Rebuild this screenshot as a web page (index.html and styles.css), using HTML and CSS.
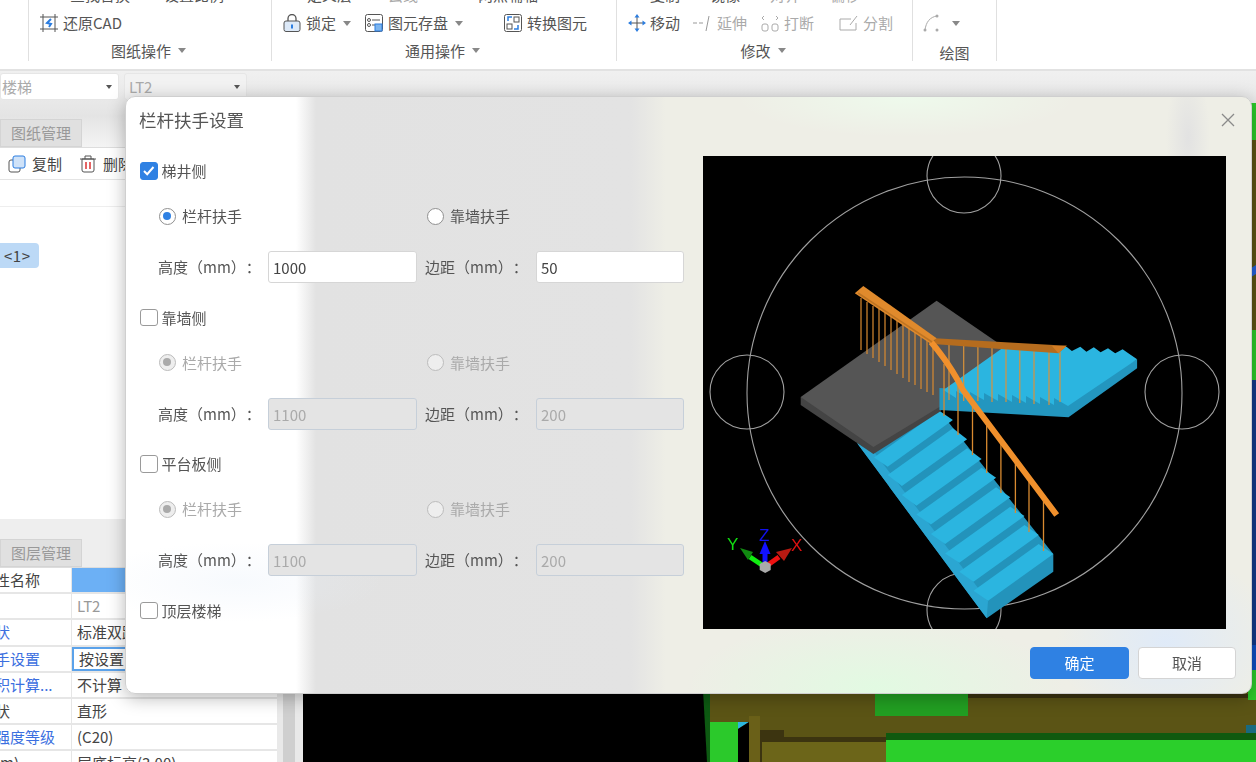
FILE: index.html
```html
<!DOCTYPE html>
<html lang="zh-CN">
<head>
<meta charset="utf-8">
<title>栏杆扶手设置</title>
<link rel="stylesheet" href="styles.css">
</head>
<body>
<div class="app">
  <header class="ribbon">
    <section class="group g-first"></section>
    <section class="group g-drawing">
      <div class="rows">
        <div class="row row-top"><span class="tool t1">查找替换</span><span class="tool t2">设置比例</span></div>
        <div class="row">
          <span class="tool"><svg class="ico" viewBox="0 0 18 18"><path d="M3 0v18M15 0v18M0 3h18M0 15h18" fill="none" stroke="#555"/><path d="M11 5 7 9l4 1-2 3" fill="none" stroke="#2b7de0" stroke-width="2"/></svg>还原CAD</span>
        </div>
      </div>
      <div class="glabel">图纸操作<i class="caret"></i></div>
    </section>
    <section class="group g-common">
      <div class="rows">
        <div class="row row-top"><span class="tool t3">定义层</span><span class="tool t4 off">云线</span><span class="tool t5">两点辅轴</span></div>
        <div class="row">
          <span class="tool w-lock"><svg class="ico" viewBox="0 0 18 18"><rect x="1" y="7" width="16" height="10.500" rx="2" fill="#dce9f8" stroke="#555"/><path d="M5 7V4.500a4 4 0 0 1 8 0V7" fill="none" stroke="#555" stroke-width="1.300"/><rect x="8" y="10.500" width="2" height="4" fill="#2b7de0"/></svg>锁定<i class="caret"></i></span>
          <span class="tool w-save"><svg class="ico" viewBox="0 0 18 18"><rect x=".5" y=".5" width="17" height="17" rx="2" fill="none" stroke="#555"/><circle cx="4" cy="6" r="1.500" fill="none" stroke="#555"/><path d="M7 6h8" stroke="#555"/><circle cx="4" cy="11" r="1.500" fill="none" stroke="#555"/><path d="M7 11h3" stroke="#555"/><rect x="10" y="10" width="7" height="7" fill="#7db5ee" stroke="#2b7de0"/></svg>图元存盘<i class="caret"></i></span>
          <span class="tool"><svg class="ico" viewBox="0 0 18 18"><rect x=".5" y=".5" width="17" height="17" rx="2" fill="none" stroke="#555"/><rect x="10" y="3" width="5" height="5" fill="none" stroke="#555"/><rect x="3" y="10" width="5" height="5" fill="none" stroke="#555"/><path d="M8 3H4v4M10 15h4v-4" fill="none" stroke="#2b7de0" stroke-width="1.500"/></svg>转换图元</span>
        </div>
      </div>
      <div class="glabel">通用操作<i class="caret"></i></div>
    </section>
    <section class="group g-modify">
      <div class="rows">
        <div class="row row-top"><span class="tool t6">复制</span><span class="tool t7">镜像</span><span class="tool t8 off">对齐</span><span class="tool t9 off">偏移</span></div>
        <div class="row">
          <span class="tool w-move"><svg class="ico" viewBox="0 0 18 18"><path d="M9 3v12M3 9h12" stroke="#555"/><path d="M9 0 6.500 3.500h5zM9 18l-2.500-3.500h5zM0 9l3.500-2.500v5zM18 9l-3.500-2.500v5z" fill="#2b7de0"/></svg>移动</span>
          <span class="tool off w-ext"><svg class="ico ico-wide" viewBox="0 0 20 18"><path d="M0 9h4M6 9h4M16 2l-3 15" fill="none" stroke="#999"/></svg>延伸</span>
          <span class="tool off w-brk"><svg class="ico ico-wide" viewBox="0 0 20 18"><rect x="2" y="10" width="6" height="7" rx="2" fill="none" stroke="#aaa"/><rect x="12" y="10" width="6" height="7" rx="2" fill="none" stroke="#aaa"/><path d="M4 2 2 4l2 2M16 2l2 2-2 2" fill="none" stroke="#aaa"/></svg>打断</span>
          <span class="tool off w-last"><svg class="ico ico-wide" viewBox="0 0 20 18"><path d="M12 5H1v11h16V9M11 11l7-9" fill="none" stroke="#aaa"/></svg>分割</span>
        </div>
      </div>
      <div class="glabel">修改<i class="caret"></i></div>
    </section>
    <section class="group g-draw">
      <div class="rows">
        <div class="row row-top"><span class="tool off t10">—</span></div>
        <div class="row">
          <span class="tool off"><svg class="ico ico-arc" viewBox="0 0 22 18"><path d="M2 16C3 8 7 3 14 2" fill="none" stroke="#aaa"/><circle cx="2" cy="16" r="1.500" fill="#aaa"/><circle cx="14" cy="2" r="1.500" fill="#aaa"/><circle cx="14" cy="16" r="1.500" fill="#aaa"/></svg><i class="caret"></i></span>
        </div>
      </div>
      <div class="glabel glabel-low">绘图</div>
    </section>
  </header>

  <div class="strip">
    <div class="select s-a"><span>楼梯</span><i class="caret dark"></i></div>
    <div class="select s-b"><span>LT2</span><i class="caret dark"></i></div>
  </div>

  <main class="main">
    <aside class="panel">
      <div class="tabbar tabbar-first"><span class="tab">图纸管理</span></div>
      <div class="panel-tools">
        <span class="ptool"><svg class="ico" viewBox="0 0 18 18"><rect x="1" y="5" width="11" height="12" rx="2" fill="none" stroke="#555"/><rect x="5" y="1" width="12" height="12" rx="2" fill="#cfe2f8" stroke="#2b7de0"/></svg>复制</span>
        <span class="ptool"><svg class="ico" viewBox="0 0 18 18"><path d="M3 4h12v11a2 2 0 0 1-2 2H5a2 2 0 0 1-2-2zM1 4h16M6 4V1h6v3" fill="none" stroke="#555"/><path d="M7 7v7M11 7v7" stroke="#d33" stroke-width="1.500"/></svg>删除</span>
      </div>
      <div class="list-head"></div>
      <div class="list"><span class="pill">&lt;1&gt;</span></div>
      <div class="tabbar tabbar-second"><span class="tab">图层管理</span></div>
      <div class="props">
        <div class="prop"><span class="k plain">属性名称</span><span class="v head"></span></div>
        <div class="prop"><span class="k"></span><span class="v muted">LT2</span></div>
        <div class="prop"><span class="k">形状</span><span class="v">标准双跑</span></div>
        <div class="prop"><span class="k">扶手设置</span><span class="v focus">按设置</span></div>
        <div class="prop"><span class="k">面积计算...</span><span class="v">不计算</span></div>
        <div class="prop"><span class="k plain">形状</span><span class="v">直形</span></div>
        <div class="prop"><span class="k">砼强度等级</span><span class="v">(C20)</span></div>
        <div class="prop"><span class="k plain">高(m)</span><span class="v">层底标高(3.00)</span></div>
      </div>
    </aside>
    <div class="gutter"><div class="scroll"></div></div>
    <div class="canvas">
      <svg class="scene" viewBox="303 103 953 659" preserveAspectRatio="none">
        <rect x="710" y="690" width="546" height="72" fill="#5b5415"/>
        <path d="M703 690h7v72h-3z" fill="#0d5a12"/>
        <rect x="875" y="690" width="93" height="26" fill="#229f22"/>
        <rect x="968" y="694" width="288" height="4" fill="#3a3210"/>
        <rect x="710" y="722" width="28" height="40" fill="#2bc92b"/>
        <path d="M738 722h11l-11 7z" fill="#2cb7de"/>
        <path d="M738 729l11-7v40h-11z" fill="#000"/>
        <rect x="749" y="716" width="11" height="46" fill="#6a6018"/>
        <path d="M760 730h24v7H886v25H760z" fill="#3c3410"/>
        <rect x="762" y="742" width="124" height="20" fill="#6c6519"/>
        <rect x="886" y="733" width="370" height="7" fill="#10590f"/>
        <rect x="886" y="740" width="370" height="22" fill="#2bcf2b"/>
        <rect x="1248" y="103" width="8" height="37" fill="#2bc92b"/>
        <rect x="1248" y="140" width="8" height="190" fill="#5b5415"/>
        <path d="M1248 270l8-5v9l-8 5z" fill="#2460d8"/>
        <rect x="1248" y="330" width="8" height="50" fill="#2bc92b"/>
        <rect x="1248" y="380" width="8" height="265" fill="#123a88"/>
        <rect x="1248" y="645" width="8" height="25" fill="#0f4fc0"/>
        <rect x="1248" y="670" width="8" height="30" fill="#2bc92b"/>
        <rect x="1246" y="725" width="10" height="8" fill="#196a80"/>
      </svg>
    </div>
  </main>
</div>

<div class="dialog">
  <div class="d-head">
    <h1 class="d-title">栏杆扶手设置</h1>
    <svg class="d-close" viewBox="0 0 14 14"><path d="M1 1l12 12M13 1 1 13" fill="none" stroke="#8a8a8a" stroke-width="1.300"/></svg>
  </div>
  <div class="d-body">
    <div class="form">
      <section class="sec">
        <div class="chk-row"><span class="box on"><svg viewBox="0 0 17 17"><path d="M4 9l3.200 3.200L13.500 5" fill="none" stroke="#fff" stroke-width="2"/></svg></span>梯井侧</div>
        <div class="radio-row">
          <span class="opt"><span class="radio sel"></span>栏杆扶手</span>
          <span class="opt"><span class="radio"></span>靠墙扶手</span>
        </div>
        <div class="field-row">
          <span class="flabel">高度（mm）：</span><span class="field">1000</span>
          <span class="flabel second">边距（mm）：</span><span class="field alt">50</span>
        </div>
      </section>
      <section class="sec">
        <div class="chk-row"><span class="box"></span>靠墙侧</div>
        <div class="radio-row dim">
          <span class="opt"><span class="radio sel gray"></span>栏杆扶手</span>
          <span class="opt"><span class="radio gray"></span>靠墙扶手</span>
        </div>
        <div class="field-row">
          <span class="flabel">高度（mm）：</span><span class="field dis">1100</span>
          <span class="flabel second">边距（mm）：</span><span class="field alt dis">200</span>
        </div>
      </section>
      <section class="sec">
        <div class="chk-row"><span class="box"></span>平台板侧</div>
        <div class="radio-row dim">
          <span class="opt"><span class="radio sel gray"></span>栏杆扶手</span>
          <span class="opt"><span class="radio gray"></span>靠墙扶手</span>
        </div>
        <div class="field-row">
          <span class="flabel">高度（mm）：</span><span class="field dis">1100</span>
          <span class="flabel second">边距（mm）：</span><span class="field alt dis">200</span>
        </div>
      </section>
      <div class="chk-row"><span class="box"></span>顶层楼梯</div>
    </div>
    <div class="preview">
      <svg viewBox="703 156 523 473">
        <g fill="none" stroke="#a0a0a0" stroke-width="1.100">
          <ellipse cx="964.500" cy="393" rx="217.500" ry="216"/>
          <circle cx="964" cy="176" r="37"/>
          <circle cx="747" cy="392" r="37"/>
          <circle cx="1182" cy="392" r="37"/>
          <circle cx="964" cy="610" r="37"/>
        </g>
        <!-- lower flight -->
        <path d="M939.300 410.700 1053.300 554v17.700l-66.600 46.600-129.500-175L874 440z" fill="#2393bb"/>
        <path d="M857.200 443.300 874 452l114 149-1.300 17.300z" fill="#2ba6d2"/>
        <g fill="#2bb5e0">
          <path d="M939.300 410.700 952.900 420l-65.200 46.700-13.700-9.300z"/>
          <path d="M952.900 428.300 967.100 439.300l-65.200 46.700-14.200-11z"/>
          <path d="M967.100 448.300 981.600 459l-65.200 46.700-14.500-10.700z"/>
          <path d="M981.600 467.700 996.100 477.700l-65.200 46.700-14.500-10z"/>
          <path d="M996.100 487.300 1010.300 497.300 945.100 544l-14.200-10z"/>
          <path d="M1010.300 506.700 1024.500 516l-65.200 46.700-14.200-9.300z"/>
          <path d="M1024.500 525 1038.700 535l-65.200 46.700-14.200-10z"/>
          <path d="M1038.700 544 1053.300 554l-65.200 46.700-14.600-10z"/>
        </g>
        <!-- landing -->
        <path d="M800.700 397v8l72.700 49L941 411v-10z" fill="#444"/>
        <path d="M936.600 300.700 1020 358l-146.600 89-72.700-50z" fill="#555"/>
        <!-- upper flight -->
        <path d="M939.400 388v22l129.100 7.300 68.600-49V359.300L1068 395z" fill="#2396bf"/>
        <path d="M943.400 390 1004 347h62.800l5.100 4 8.400-4.300 6.100 5 7.400-4.400 6.800 5 7.400-4 7.200 5 7.400-4 14.500 10L1068 406 1054 398v7L1040 397v7L1026 396v7L1012 395v7L998 394v7L984 393v7L970 392v7L956 391v7z" fill="#2bb5e0"/>
        <!-- balusters -->
        <path d="M861 298v52M867 302v52M873 306v52M879 309v53M885 313v53M891 317v53M897 321v53M903 324v54M909 328v54M915 332v53M921 336v53M927 339v53M933 343v52" stroke="#d98a30" stroke-width="1.200" fill="none"/>
        <path d="M949 345v55M963.700 346v55M977.900 346v55M992 347v55M1006 347v55M1019.800 348v55M1034 349v55M1049 350v55M1060 352v50" stroke="#d9923a" stroke-width="1.200" fill="none"/>
        <path d="M944 364v52M958 383v52M972.500 403v52M986.700 422v51M1000.900 441v52M1015.400 460v53M1029 479v53M1043.500 498v53" stroke="#d98a30" stroke-width="1.300" fill="none"/>
        <!-- rails -->
        <path d="M935 338.300 1066.800 345.700 1058.400 353.300 933 344z" fill="#b56c1e"/>
        <path d="M1052 346l14.800-.3-8.400 7.600z" fill="#d27d25"/>
        <path d="M931 342c12 14 24 32 32 48L1056.700 515" fill="none" stroke="#f0902c" stroke-width="6"/>
        <path d="M854.800 293.300 863.300 286l73.300 52.300-6.700 5z" fill="#e08a2c"/>
        <path d="M858 293l74 49" fill="none" stroke="#bd7423" stroke-width="1.500"/>
        <!-- axes -->
        <path d="M765 567 779 557" stroke="#ee1111" stroke-width="5"/>
        <path d="M776 552l16-4-8 13z" fill="#b81a12"/>
        <path d="M765 567 750 557" stroke="#11ee11" stroke-width="5"/>
        <path d="M753 552l-13-4 8 12z" fill="#118a11"/>
        <path d="M765 567v-18" stroke="#1111ff" stroke-width="5"/>
        <path d="M765 541l-5.500 13h11z" fill="#1111ff"/>
        <path d="M765.200 561l5.500 3v6l-5.500 3-5.500-3v-6z" fill="#aaa"/>
        <text class="ax" x="727" y="550" fill="#11dd11">Y</text>
        <text class="ax" x="759" y="541" fill="#1111ee">Z</text>
        <text class="ax" x="791" y="551" fill="#dd1111">X</text>
      </svg>
    </div>
  </div>
  <div class="d-foot">
    <button class="btn primary">确定</button>
    <button class="btn cancel">取消</button>
  </div>
</div>
</body>
</html>
```
FILE: styles.css
```css
* { box-sizing: border-box; }
html, body { margin: 0; width: 1256px; height: 762px; overflow: hidden; }
body { font: 15px/1.2 "Noto Sans CJK SC", "Liberation Sans", sans-serif; color: #444; background: #eee; position: relative; text-spacing-trim: space-all; filter: blur(.35px); }
.app { display: flex; flex-direction: column; width: 1256px; height: 762px; }

/* ribbon */
.ribbon { display: flex; height: 71px; flex: none; background: #fff; border-bottom: 2px solid #e2e2e2; overflow: hidden; padding-bottom: 8px; }
.group { display: flex; flex-direction: column; justify-content: flex-end; border-right: 1px solid #e0e0e0; flex: none; padding-left: 11px; }
.g-first { width: 29px; }
.g-drawing { width: 243px; }
.g-common { width: 345px; }
.g-modify { width: 296px; }
.g-draw { width: 84px; padding-left: 10px; }
.rows { display: flex; flex-direction: column; justify-content: flex-end; height: 50px; flex: none; margin-top: -12px; }
.row { display: flex; align-items: center; height: 28px; flex: none; }
.row-top { color: #555; }
.tool { display: inline-flex; align-items: center; gap: 5px; white-space: nowrap; color: #555; }
.tool.off { color: #aaa; }
.t1 { margin-left: 30px; } .t2 { margin-left: 34px; }
.t3 { margin-left: 24px; } .t4 { margin-left: 36px; } .t5 { margin-left: 60px; }
.t6 { margin-left: 22px; } .t7 { margin-left: 30px; } .t8 { margin-left: 30px; } .t9 { margin-left: 30px; }
.t10 { margin-left: 40px; }
.w-lock { margin-right: 14px; }
.w-save { margin-right: 41px; }
.w-move { margin-right: 13px; gap: 4px; }
.w-ext { margin-right: 13px; gap: 4px; }
.w-brk { margin-right: 25px; gap: 4px; }
.w-last { gap: 4px; }
.ico { width: 18px; height: 18px; flex: none; }
.ico-wide { width: 20px; }
.ico-arc { width: 22px; }
.tool .caret { margin-left: 2px; }
.glabel { height: 24px; flex: none; display: flex; align-items: center; justify-content: center; gap: 7px; color: #555; margin-left: -14px; padding-top: 3px; }
.glabel-low { padding-top: 7px; margin-left: -10px; }
.caret { display: inline-block; width: 0; height: 0; border: 4px solid transparent; border-top: 5px solid #888; border-bottom: 0; }
.caret.dark { border-width: 3px; border-top: 4px solid #555; border-bottom: 0; }

/* strip */
.strip { display: flex; gap: 5px; height: 32px; flex: none; padding-top: 2px; background: linear-gradient(#f0f0f0, #e8e8e8); }
.select { height: 27px; display: flex; align-items: center; justify-content: space-between; padding: 0 6px 0 4px; border: 1px solid #e6e6e6; border-radius: 3px; color: #aaa; }
.s-a { width: 119px; background: #fff; padding-left: 1px; }
.s-b { width: 123px; background: #f2f2f2; }

/* main */
.main { flex: 1; display: flex; min-height: 0; }
.panel { width: 277px; flex: none; background: #fff; display: flex; flex-direction: column; }
.tabbar { height: 29px; flex: none; background: #ececec; border-bottom: 1px solid #ddd; display: flex; }
.tabbar-first { height: 45px; padding-top: 16px; background: linear-gradient(#e8e8e8, #e4e4e4 30%, #f4f4f4); }
.tabbar-second { height: 49px; padding-top: 20px; background: #eee; }
.tab { width: 82px; display: flex; align-items: center; justify-content: center; background: #e0e0e0; border: 1px solid #d4d4d4; color: #999; }
.panel-tools { height: 32px; flex: none; display: flex; align-items: center; gap: 17px; padding: 1px 0 0 8px; border-bottom: 1px solid #e4e4e4; }
.ptool { display: inline-flex; align-items: center; gap: 6px; white-space: nowrap; }
.list-head { height: 27px; flex: none; border-bottom: 1px solid #eee; }
.list { height: 312px; flex: none; padding-top: 36px; }
.pill { display: inline-flex; align-items: center; height: 25px; width: 39px; padding-left: 4px; background: #bcd9f6; border-radius: 0 4px 4px 0; letter-spacing: .5px; }
.props { flex: 1; overflow: hidden; background: #fff; }
.prop { display: flex; height: 26.200px; border-bottom: 2px solid #e6e6e6; }
.k { width: 72px; flex: none; padding-left: 0; text-indent: -20px; white-space: nowrap; overflow: hidden; color: #3b6fe0; line-height: 24px; border-right: 1px solid #e6e6e6; }
.k.plain { color: #444; }
.v { flex: 1; padding-left: 5px; line-height: 24px; color: #444; white-space: nowrap; }
.v.head { background: #6cb0f5; }
.v.muted { color: #999; }
.v.focus { border: 2px solid #5ba2ea; padding-left: 5px; line-height: 20px; }
.gutter { width: 26px; flex: none; background: #e9e9e9; padding-left: 6px; }
.scroll { width: 12px; height: 100%; background: #cfcfcf; }
.canvas { flex: 1; background: #000; position: relative; overflow: hidden; }
.scene { position: absolute; left: 0; bottom: 0; width: 953px; height: 659px; }

/* dialog */
.dialog {
  position: absolute; left: 125px; top: 96px; width: 1127px; height: 598px;
  display: flex; flex-direction: column;
  border-radius: 10px; border: 1px solid #cfcfcf; overflow: hidden; color: #555;
  box-shadow: 0 4px 18px rgba(0,0,0,.28);
  background:
    radial-gradient(ellipse 150px 40px at 110px 485px, rgba(232,240,250,.35), rgba(232,240,250,0)),
    radial-gradient(ellipse 110px 90px at 1040px 545px, rgba(222,234,250,.9), rgba(222,234,250,0)),
    radial-gradient(ellipse 190px 70px at 750px 590px, rgba(226,250,226,1), rgba(226,250,226,0)),
    radial-gradient(ellipse 170px 40px at 780px 0, rgba(238,250,236,1), rgba(238,250,236,0)),
    radial-gradient(ellipse 22px 70px at 1062px 40px, rgba(226,226,226,1), rgba(226,226,226,0)),
    linear-gradient(90deg, #fff 0, #fff 170px, #e2e2e2 190px, #e3e3e3 505px, #eeeee6 540px, #eeeee6 100%);
}
.d-head { height: 59px; flex: none; display: flex; justify-content: space-between; align-items: flex-start; padding: 11px 16px 0 13px; }
.d-title { margin: 0; font-size: 17.500px; font-weight: 400; line-height: 24px; color: #555; }
.d-close { width: 14px; height: 14px; margin-top: 5px; }
.d-body { display: flex; flex: none; height: 473px; padding-left: 14px; }
.form { width: 563px; flex: none; }
.sec { height: 146.500px; }
.chk-row { display: flex; align-items: center; gap: 4px; height: 30px; }
.box { width: 17.500px; height: 17.500px; flex: none; border: 1.500px solid #9a9a9a; border-radius: 3px; background: #fff; }
.box svg { display: block; width: 17px; height: 17px; margin: -1.500px; }
.box.on { background: #2f81e3; border-color: #2f81e3; }
.radio-row { display: flex; align-items: center; height: 30px; margin-top: 15px; padding-left: 19px; }
.radio-row.dim { color: #aaa; }
.opt { display: flex; align-items: center; gap: 6px; width: 268px; }
.radio { width: 17px; height: 17px; flex: none; border-radius: 50%; border: 1.500px solid #8f8f8f; background: #fff; position: relative; }
.radio.gray { border-color: #bbb; background: #eee; }
.radio.sel::after { content: ""; position: absolute; left: 3px; top: 3px; width: 8px; height: 8px; border-radius: 50%; background: #2f81e3; }
.radio.sel.gray::after { background: #aaa; }
.field-row { display: flex; align-items: center; height: 32px; margin-top: 20px; padding-left: 18px; }
.flabel { width: 110px; flex: none; white-space: nowrap; }
.flabel.second { width: 111px; margin-left: 8px; }
.field { width: 149px; height: 32px; flex: none; line-height: 31px; padding-left: 4px; border: 1px solid #d6d6d6; border-radius: 3px; background: #fff; color: #444; }
.field.alt { width: 148px; }
.field.dis { background: #e4e4e4; border-color: #c6cfd9; color: #aaa; }
.preview { width: 523px; height: 473px; flex: none; background: #000; }
.preview svg { display: block; width: 523px; height: 473px; }
.ax { font: 17px "Liberation Sans", sans-serif; }
.d-foot { flex: 1; display: flex; justify-content: flex-end; gap: 9px; padding: 18px 15px 0 0; }
.btn { width: 99px; height: 32px; font: inherit; border: 1px solid #d4d4d4; border-radius: 4px; background: #fff; color: #555; padding: 0; }
.btn.cancel { width: 98px; }
.btn.primary { background: #2f81e3; border-color: #2f81e3; color: #fff; }
```
